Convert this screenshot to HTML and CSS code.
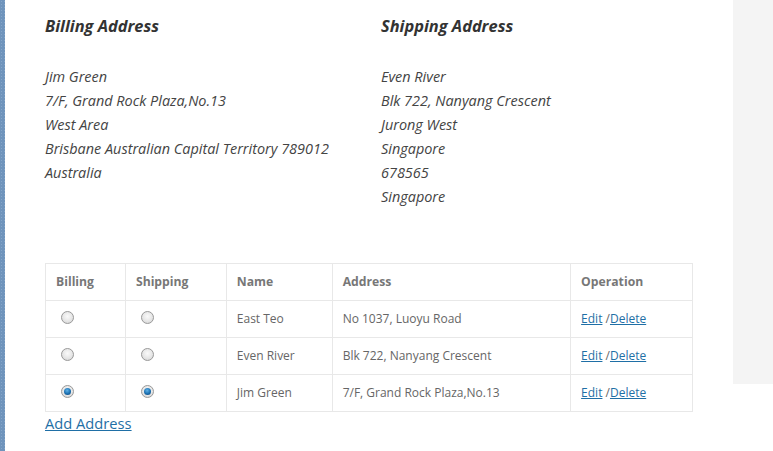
FILE: index.html
```html
<!DOCTYPE html>
<html>
<head>
<meta charset="utf-8">
<link rel="stylesheet" href="styles.css">
</head>
<body>
<div class="page">
  <div class="strip"></div>
  <main class="main">
    <div class="addresses">
      <section class="addr">
        <h2 class="addr-title">Billing Address</h2>
        <div class="addr-lines">
          <div>Jim Green</div>
          <div>7/F, Grand Rock Plaza,No.13</div>
          <div>West Area</div>
          <div>Brisbane Australian Capital Territory 789012</div>
          <div>Australia</div>
        </div>
      </section>
      <section class="addr">
        <h2 class="addr-title">Shipping Address</h2>
        <div class="addr-lines">
          <div>Even River</div>
          <div>Blk 722, Nanyang Crescent</div>
          <div>Jurong West</div>
          <div>Singapore</div>
          <div>678565</div>
          <div>Singapore</div>
        </div>
      </section>
    </div>
    <table class="tbl">
      <thead>
        <tr>
          <th class="c1">Billing</th>
          <th class="c2">Shipping</th>
          <th class="c3">Name</th>
          <th class="c4">Address</th>
          <th class="c5">Operation</th>
        </tr>
      </thead>
      <tbody>
        <tr>
          <td><span class="radio"></span></td>
          <td><span class="radio"></span></td>
          <td>East Teo</td>
          <td>No 1037, Luoyu Road</td>
          <td><a href="#">Edit</a> /<a href="#">Delete</a></td>
        </tr>
        <tr>
          <td><span class="radio"></span></td>
          <td><span class="radio"></span></td>
          <td>Even River</td>
          <td>Blk 722, Nanyang Crescent</td>
          <td><a href="#">Edit</a> /<a href="#">Delete</a></td>
        </tr>
        <tr>
          <td><span class="radio checked"></span></td>
          <td><span class="radio checked"></span></td>
          <td>Jim Green</td>
          <td>7/F, Grand Rock Plaza,No.13</td>
          <td><a href="#">Edit</a> /<a href="#">Delete</a></td>
        </tr>
      </tbody>
    </table>
    <a class="add" href="#">Add Address</a>
  </main>
  <aside class="side"></aside>
</div>
</body>
</html>
```
FILE: styles.css
```css
* { box-sizing: border-box; }
html, body { margin: 0; padding: 0; background: #fff; }
body { font-family: "Open Sans", "DejaVu Sans", sans-serif; color: #444; }
.page { display: flex; align-items: flex-start; height: 451px; }
.strip {
  width: 5px; align-self: stretch; flex: none;
  background-color: #6f94bc;
  background-image: radial-gradient(circle, #86a7ca 0.6px, transparent 0.9px);
  background-size: 3px 3px;
}
.main { width: 728px; flex: none; padding: 15px 0 0 40px; }
.side { width: 40px; height: 384px; background: #f4f4f4; flex: none; }
.addresses { display: flex; }
.addr { width: 336px; }
.addr-title {
  margin: 0; font-size: 16.4px; line-height: 22px; font-weight: 700; font-style: italic; color: #333;
}
.addr-lines { margin-top: 28px; font-size: 14.45px; line-height: 24px; font-style: italic; color: #444; }
.tbl {
  margin-top: 54px; border-collapse: collapse; width: 648px;
  font-size: 12px; color: #666;
}
.tbl th, .tbl td {
  border: 1px solid #e8e8e8; padding: 8px 10px; line-height: 20px; text-align: left; vertical-align: middle;
}
.tbl th { font-weight: 700; color: #777; font-size: 12.2px; }
.c1 { width: 80px; }
.c2 { width: 101px; }
.c3 { width: 106px; }
.c4 { width: 239px; }
.c5 { width: 122px; }
.tbl a { color: #1f6fa6; text-decoration: underline; }
.radio {
  display: inline-block; width: 13px; height: 13px; border-radius: 50%;
  border: 1px solid #9a9a9a; margin-left: 5px; vertical-align: -1px;
  background: radial-gradient(circle at 50% 40%, #fafafa 0%, #e6e6e6 55%, #cfcfcf 100%);
  position: relative;
}
.radio.checked::after {
  content: ""; position: absolute; left: 2px; top: 2px; width: 7px; height: 7px; border-radius: 50%;
  background: radial-gradient(circle at 45% 35%, #5fb2e8 0%, #1a6fb0 55%, #0b3e6e 100%);
}
.add { display: inline-block; font-size: 14.7px; line-height: 22px; color: #1f6fa6; text-decoration: underline; }
```
